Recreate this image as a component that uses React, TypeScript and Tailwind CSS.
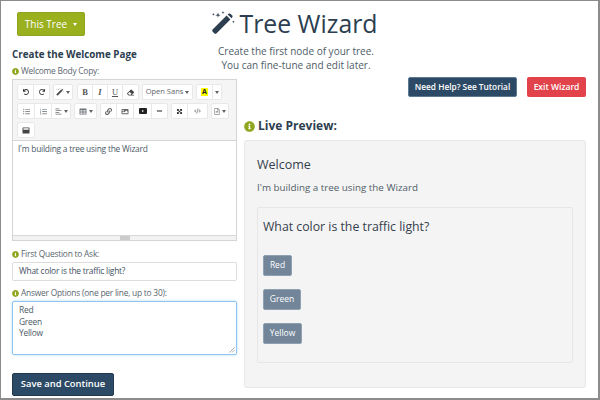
import React from "react";
import { FaInfoCircle, FaUndo, FaRedo, FaEraser, FaListUl, FaListOl, FaAlignLeft, FaTable, FaLink, FaImage, FaMinus, FaArrowsAlt, FaCode, FaRegFileAlt, FaWindowMaximize } from "react-icons/fa";

const Caret = ({ className = "" }: { className?: string }) => (
  <span className={`inline-block w-0 h-0 border-x-[2.5px] border-x-transparent border-t-[3px] border-t-current ${className}`} />
);

const Wand = ({ size, className = "" }: { size: number; className?: string }) => (
  <svg width={size} height={size} viewBox="0 0 24 24" className={className} fill="currentColor">
    <path d="M15.6 4.6 L19.4 8.4 L5.4 22.4 Q4.4 23.2 3.4 22.4 L1.6 20.6 Q0.8 19.6 1.6 18.6 Z" />
    <path d="M17.4 2.8 Q18.4 2 19.4 2.8 L21.2 4.6 Q22 5.6 21.2 6.6 L20.5 7.3 L16.7 3.5 Z" />
    <path d="M7 1.6 L7.6 3.6 L9.6 4.2 L7.6 4.8 L7 6.8 L6.4 4.8 L4.4 4.2 L6.4 3.6 Z" />
    <path d="M12 0 L12.4 1.2 L13.6 1.6 L12.4 2 L12 3.2 L11.6 2 L10.4 1.6 L11.6 1.2 Z" />
    <path d="M2.4 2 L2.8 3 L3.8 3.4 L2.8 3.8 L2.4 4.8 L2 3.8 L1 3.4 L2 3 Z" />
    <path d="M22.4 9.4 L22.8 10.4 L23.8 10.8 L22.8 11.2 L22.4 12.2 L22 11.2 L21 10.8 L22 10.4 Z" />
  </svg>
);

const Tb = ({ w, children, left, right }: { w: string; children: React.ReactNode; left?: boolean; right?: boolean }) => (
  <div className={`${w} h-[16px] -mr-px bg-white border border-[#e8e8e8] flex items-center justify-center gap-[2px] text-[#5f6468] text-[8px] ${left ? "rounded-l-[2px]" : ""} ${right ? "rounded-r-[2px]" : ""}`}>
    {children}
  </div>
);

const Glyph = ({ children, className = "" }: { children: React.ReactNode; className?: string }) => (
  <span className={`text-[8.5px] leading-none text-[#555] ${className}`} style={{ fontFamily: '"Liberation Serif", serif' }}>{children}</span>
);

const Label = ({ children }: { children: React.ReactNode }) => (
  <div className="flex items-center gap-[2px] text-[8.4px] tracking-[-0.22px] leading-[12px] text-[#5a6670]">
    <FaInfoCircle className="text-[#8fa61f] w-[7px] h-[7px]" />
    <span>{children}</span>
  </div>
);

const Toolbar = () => (
  <div className="bg-[#f5f5f5] border-b border-[#d5d5d5] pl-[4px] pt-[4px] pb-[2px] flex flex-col gap-[3px]">
    <div className="flex gap-[4px]">
      <div className="flex">
        <Tb w="w-[17px]" left><FaUndo className="w-[6px] h-[6px] text-[#333]" /></Tb>
        <Tb w="w-[17px]" right><FaRedo className="w-[6px] h-[6px] text-[#333]" /></Tb>
      </div>
      <div className="flex">
        <Tb w="w-[20px]" left right><Wand size={8} className="text-[#444]" /><Caret /></Tb>
      </div>
      <div className="flex ml-[1px]">
        <Tb w="w-[16px]" left><Glyph className="font-bold">B</Glyph></Tb>
        <Tb w="w-[16px]"><Glyph className="italic font-bold">I</Glyph></Tb>
        <Tb w="w-[16px]"><Glyph className="underline">U</Glyph></Tb>
        <Tb w="w-[17px]" right><FaEraser className="w-[7px] h-[7px] text-[#444]" /></Tb>
      </div>
      <div className="flex">
        <Tb w="w-[51px]" left right><span className="text-[7.5px]">Open Sans</span><Caret /></Tb>
      </div>
      <div className="flex">
        <Tb w="w-[17px]" left><span className="bg-[#ffff00] text-[#222] font-bold text-[7px] leading-[8px] px-[1px]">A</span></Tb>
        <Tb w="w-[10px]" right><Caret /></Tb>
      </div>
    </div>
    <div className="flex gap-[4px]">
      <div className="flex">
        <Tb w="w-[18px]" left><FaListUl className="w-[7px] h-[7px] text-[#8a8f93]" /></Tb>
        <Tb w="w-[18px]"><FaListOl className="w-[7px] h-[7px] text-[#8a8f93]" /></Tb>
        <Tb w="w-[20px]" right><FaAlignLeft className="w-[7px] h-[7px] text-[#6e7377]" /><Caret /></Tb>
      </div>
      <div className="flex">
        <Tb w="w-[23px]" left right><FaTable className="w-[8px] h-[7px] text-[#6e7377]" /><Caret /></Tb>
      </div>
      <div className="flex">
        <Tb w="w-[17px]" left><FaLink className="w-[7px] h-[7px] text-[#666]" /></Tb>
        <Tb w="w-[18px]"><FaImage className="w-[8px] h-[7px] text-[#666]" /></Tb>
        <Tb w="w-[19px]">
          <span className="w-[8px] h-[6px] bg-[#222] rounded-[1px] flex items-center justify-center">
            <span className="w-0 h-0 border-y-[1.5px] border-y-transparent border-l-[2.5px] border-l-white" />
          </span>
        </Tb>
        <Tb w="w-[17px]" right><FaMinus className="w-[7px] h-[6px] text-[#222]" /></Tb>
      </div>
      <div className="flex">
        <Tb w="w-[17px]" left><FaArrowsAlt className="w-[7px] h-[7px] text-[#333] rotate-45" /></Tb>
        <Tb w="w-[21px]" right><FaCode className="w-[7px] h-[6px] text-[#999]" /></Tb>
      </div>
      <div className="flex">
        <Tb w="w-[18px]" left right><FaRegFileAlt className="w-[6px] h-[7px] text-[#888]" /><Caret /></Tb>
      </div>
    </div>
    <div className="flex">
      <Tb w="w-[18px]" left right><FaWindowMaximize className="w-[8px] h-[7px] text-[#444]" /></Tb>
    </div>
  </div>
);

const Answer = ({ w, children }: { w: string; children: React.ReactNode }) => (
  <div className={`${w} h-[21px] bg-[#738599] border border-[#8fa0b0] rounded-[2px] text-white text-[8.5px] flex items-center justify-center`}>
    {children}
  </div>
);

export default function App() {
  return (
    <div className="w-[600px] h-[400px] overflow-hidden bg-white border border-[#8c8c8c] border-b-2 border-r-2 flex text-[#34495e]" style={{ fontFamily: '"Open Sans", sans-serif' }}>
      <div className="w-[225px] ml-[11px] shrink-0 flex flex-col">
        <button className="mt-[11px] ml-[5px] w-[68px] h-[24px] bg-[#9bb01f] rounded-[2px] border border-[#8fa31c] text-white text-[10px] flex items-center justify-center gap-[6px]">
          This Tree <Caret />
        </button>
        <h2 className="mt-[12px] text-[9.8px] leading-[14px] font-bold text-[#2c3e50]">Create the Welcome Page</h2>
        <div className="mt-[3px]"><Label>Welcome Body Copy:</Label></div>
        <div className="mt-[2px] border border-[#d5d5d5] h-[162px] flex flex-col">
          <Toolbar />
          <div className="flex-1 px-[5px] pt-[2px] text-[8.4px] tracking-[-0.22px] leading-[12px] text-[#4c5a66]">I'm building a tree using the Wizard</div>
          <div className="h-[5px] bg-[#f2f2f2] border-t border-[#d8d8d8] flex justify-center items-center">
            <div className="w-[10px] h-[4px] bg-[#cccccc]" />
          </div>
        </div>
        <div className="mt-[7px]"><Label>First Question to Ask:</Label></div>
        <div className="mt-[2px] h-[19px] border border-[#dddddd] rounded-[2px] px-[6px] flex items-center text-[8.4px] tracking-[-0.22px] text-[#3f5164]">What color is the traffic light?</div>
        <div className="mt-[6px]"><Label>Answer Options (one per line, up to 30):</Label></div>
        <div className="mt-[2px] h-[54px] border border-[#8fc4ee] rounded-[2px] shadow-[0_0_3px_#b5dcf8] px-[6px] pt-[2px] text-[8.4px] tracking-[-0.22px] leading-[11.7px] text-[#4c5a66] relative">
          <div>Red</div>
          <div>Green</div>
          <div>Yellow</div>
          <svg width="6" height="6" viewBox="0 0 6 6" className="absolute right-[1px] bottom-[1px] text-[#999]" stroke="currentColor" strokeWidth="0.8">
            <path d="M0.5 5.5 L5.5 0.5 M3 5.5 L5.5 3" />
          </svg>
        </div>
        <button className="mt-[18px] w-[102px] h-[23px] bg-[#2c4a66] rounded-[2px] border border-[#22394f] text-white text-[9.4px] font-semibold flex items-center justify-center">Save and Continue</button>
      </div>

      <div className="ml-[7px] w-[342px] shrink-0 flex flex-col">
        <div className="-ml-[44px] w-[192px] flex flex-col items-center">
          <div className="mt-[8px] -ml-[4px] flex items-center gap-[5px] h-[28px]">
            <Wand size={24} className="text-[#2c3e50]" />
            <span className="text-[24.8px] leading-[28px] text-[#2c3e50]">Tree Wizard</span>
          </div>
          <div className="mt-[7px] text-[10px] leading-[14px] text-center text-[#4f5c68] whitespace-nowrap">
            <div>Create the first node of your tree.</div>
            <div>You can fine-tune and edit later.</div>
          </div>
        </div>
        <div className="mt-[5px] flex justify-end gap-[10px]">
          <button className="w-[109px] h-[20px] bg-[#2c4a66] rounded-[2px] border border-[#5c7a94] text-white text-[8.3px] font-semibold">Need Help? See Tutorial</button>
          <button className="w-[59px] h-[20px] bg-[#e2434a] rounded-[2px] text-white text-[8.5px] font-semibold">Exit Wizard</button>
        </div>
        <div className="mt-[21px] flex items-center gap-[3px] h-[16px]">
          <FaInfoCircle className="w-[11px] h-[11px] text-[#8fa61f]" />
          <span className="text-[12px] font-bold text-[#2c3e50]">Live Preview:</span>
        </div>
        <div className="mt-[6px] h-[248px] bg-[#f4f4f4] border border-[#e7e7e7] rounded-[3px] px-[12px] pt-[15px]">
          <div className="text-[12.5px] leading-[18px] text-[#34404c]">Welcome</div>
          <div className="mt-[7px] text-[9.8px] leading-[14px] text-[#4f5c68]">I'm building a tree using the Wizard</div>
          <div className="mt-[12px] h-[156px] border border-[#e6e6e6] rounded-[2px] pl-[5px] pt-[10px] flex flex-col items-start">
            <div className="text-[12.3px] leading-[18px] text-[#34404c]">What color is the traffic light?</div>
            <div className="mt-[19px] flex flex-col gap-[13px]">
              <Answer w="w-[29px]">Red</Answer>
              <Answer w="w-[38px]">Green</Answer>
              <Answer w="w-[39px]">Yellow</Answer>
            </div>
          </div>
        </div>
      </div>
    </div>
  );
}
